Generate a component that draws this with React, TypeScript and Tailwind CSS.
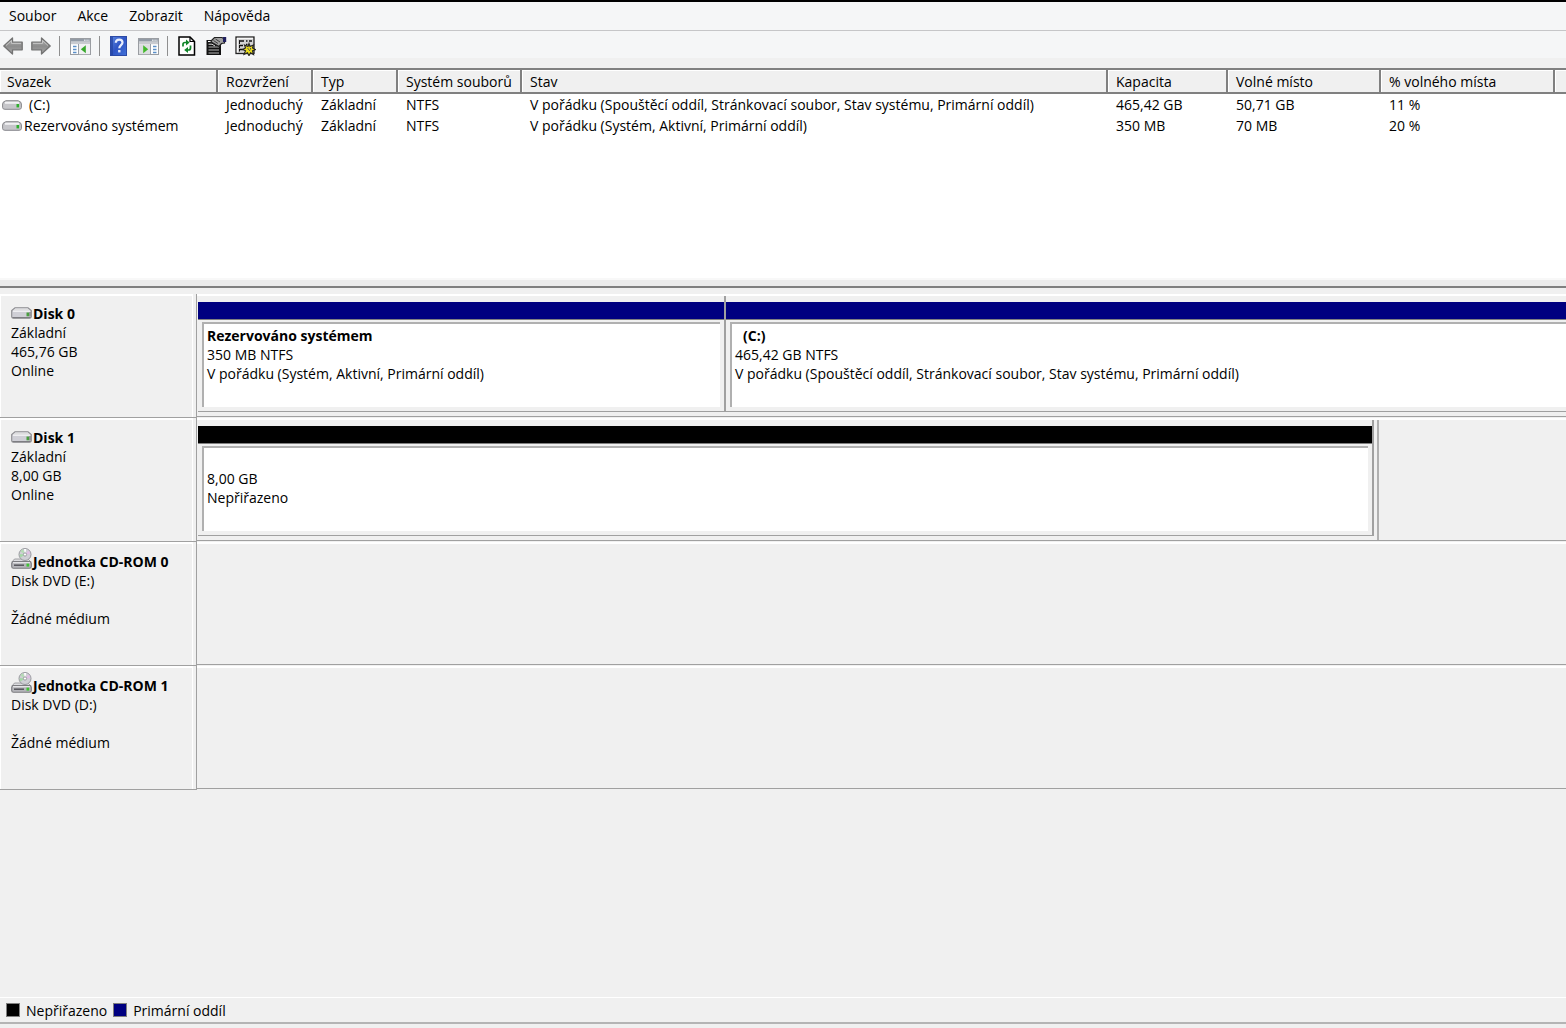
import type { ReactNode } from "react";

const menu = ["Soubor", "Akce", "Zobrazit", "Nápověda"];

const columns: { label: string; width: string }[] = [
  { label: "Svazek", width: "w-[218px]" },
  { label: "Rozvržení", width: "w-[95px]" },
  { label: "Typ", width: "w-[85px]" },
  { label: "Systém souborů", width: "w-[124px]" },
  { label: "Stav", width: "w-[586px]" },
  { label: "Kapacita", width: "w-[120px]" },
  { label: "Volné místo", width: "w-[153px]" },
  { label: "% volného místa", width: "w-[174px]" },
];

const volumes: { name: string; indent?: boolean; cells: string[] }[] = [
  {
    name: "(C:)",
    indent: true,
    cells: [
      "Jednoduchý",
      "Základní",
      "NTFS",
      "V pořádku (Spouštěcí oddíl, Stránkovací soubor, Stav systému, Primární oddíl)",
      "465,42 GB",
      "50,71 GB",
      "11 %",
    ],
  },
  {
    name: "Rezervováno systémem",
    cells: ["Jednoduchý", "Základní", "NTFS", "V pořádku (Systém, Aktivní, Primární oddíl)", "350 MB", "70 MB", "20 %"],
  },
];

function ArrowIcon({ flip }: { flip?: boolean }) {
  return (
    <svg width="20" height="18" viewBox="0 0 20 18" className={flip ? "-scale-x-100" : ""}>
      <defs>
        <linearGradient id={flip ? "arrow-r" : "arrow-l"} x1="0" y1="0" x2="0" y2="1">
          <stop offset="0" stopColor="#b8b8b8" />
          <stop offset="0.5" stopColor="#8c8c8c" />
          <stop offset="1" stopColor="#a8a8a8" />
        </linearGradient>
      </defs>
      <path
        d="M0.8 9 9.500 1V5.200H19.200V12.800H9.500V17Z"
        fill={flip ? "url(#arrow-r)" : "url(#arrow-l)"}
        stroke="#747474"
        strokeWidth="1.300"
        strokeLinejoin="round"
      />
      <path d="M3 8.500 8.500 3.500V6.400H18" fill="none" stroke="#cacaca" strokeWidth="0.900" />
    </svg>
  );
}

function PaneIcon({ right }: { right?: boolean }) {
  return (
    <svg width="21" height="17" viewBox="0 0 21 17">
      <rect x="0.5" y="0.5" width="20" height="16" fill="#fff" stroke="#9a9da2" />
      <rect x="1" y="1" width="19" height="2.6" fill="#929aa5" />
      <path d="M14 2.2h1.6M16.4 2.2h1.3M18.4 2.2h1" stroke="#fff" />
      <rect x="1" y="4" width="19" height="2.2" fill="#c9cbd0" />
      {right ? (
        <>
          <path d="M12.5 6v10.5" stroke="#9aa0a8" />
          <rect x="1" y="6.2" width="11" height="10" fill="#dcdee0" />
          <path d="M5.2 7.2v8l5-4z" fill="#43b82c" />
          <path d="M15 8.5h3.500M15 11.5h3.500M15 14.5h3.500" stroke="#5b8fc8" strokeWidth="1.4" />
        </>
      ) : (
        <>
          <path d="M8.5 6v10.5" stroke="#9aa0a8" />
          <path d="M3 8.5h3.500M3 11.5h3.500M3 14.5h3.500" stroke="#5b8fc8" strokeWidth="1.4" />
          <rect x="9" y="6.2" width="11" height="10" fill="#f0f1f2" />
          <path d="M15.8 7.2v8l-5-4z" fill="#38a82c" />
        </>
      )}
    </svg>
  );
}

function HelpIcon() {
  return (
    <svg width="17" height="20" viewBox="0 0 17 20">
      <defs>
        <linearGradient id="help" x1="0" y1="0" x2="1" y2="1">
          <stop offset="0" stopColor="#5d88e0" />
          <stop offset="0.5" stopColor="#2f55c4" />
          <stop offset="1" stopColor="#4272d8" />
        </linearGradient>
      </defs>
      <rect x="0.5" y="0.5" width="16" height="19" fill="url(#help)" stroke="#2c4aa6" />
      <path d="M2 1v18" stroke="#2342a0" strokeWidth="1.4" />
      <path
        d="M5.800 6.800C5.800 4.600 7.200 3.600 9.200 3.600c2 0 3.300 1 3.300 2.900 0 2.600-3.200 2.800-3.200 5.800"
        fill="none"
        stroke="#e8eefc"
        strokeWidth="2.200"
      />
      <rect x="8.100" y="14" width="2.400" height="2.400" fill="#e8eefc" />
    </svg>
  );
}

function RefreshIcon() {
  return (
    <svg width="18" height="20" viewBox="0 0 18 20">
      <path d="M1 1H12L16.500 5.500V19H1Z" fill="#fff" stroke="#000" strokeWidth="1.500" />
      <path d="M12 1V5.500H16.500" fill="none" stroke="#000" strokeWidth="1.200" />
      <path d="M5 10.500V8.500Q5 6.500 7 6.500H8.500" fill="none" stroke="#11852a" strokeWidth="1.700" />
      <path d="M8 3.600V9.400L11.600 6.500Z" fill="#11852a" />
      <path d="M12.500 9.500V12Q12.500 14 10.500 14H9.500" fill="none" stroke="#11852a" strokeWidth="1.700" />
      <path d="M10 11.100V16.900L6.200 14Z" fill="#11852a" />
    </svg>
  );
}

function PropertiesIcon() {
  return (
    <svg width="21" height="20" viewBox="0 0 21 20">
      <path d="M0.500 4H15V19H0.500Z" fill="#111" />
      <path d="M2 5.500H5" stroke="#fff" strokeWidth="1.100" />
      <path d="M2.500 11H13M2.500 14H13M2.500 17H13" stroke="#c8c8c8" strokeWidth="0.900" />
      <path d="M2.500 8.200H6L9 10" stroke="#ddd" fill="none" />
      <path d="M5 5 8.500 1.500H16L18.500 3V7L15.500 7.500 13 10.500 6 6.500Z" fill="#a0a0a0" stroke="#222" strokeWidth="1.200" />
      <path d="M7.500 4.500 12 7.500M9.500 3 14 6" stroke="#333" strokeWidth="0.900" />
      <rect x="17" y="1" width="3.200" height="5" fill="#20205e" />
    </svg>
  );
}

function SettingsIcon() {
  return (
    <svg width="21" height="20" viewBox="0 0 21 20">
      <rect x="1" y="1" width="18" height="16.500" fill="#d4d4d4" stroke="#222" strokeWidth="1.300" />
      <path d="M2 2.300H18M2.300 2V16.500" stroke="#fff" />
      <path d="M4 5H9M4 9.500H8M4 13.500H8" stroke="#111" strokeWidth="1.400" />
      <path d="M4.500 4.500V8M4.500 9V12M4.500 13V15.500" stroke="#111" />
      <path d="M11 5H12.500M14 5H17M11 8.500H12.500" stroke="#111" strokeWidth="1.500" />
      <path
        d="M14 7.500 15 10.500 18.500 9 17.500 12 20.500 13.500 17.500 14.800 18.500 18.500 15.500 16.800 14 19.700 12.500 16.800 9 18.500 10.500 14.800 7.500 13.500 10.500 12 9.500 9 13 10.500Z"
        fill="#e8dc1c"
        stroke="#222"
        strokeWidth="1.100"
      />
      <path d="M12.500 12 15 15M15.500 12V13.500" stroke="#555" />
    </svg>
  );
}

function VolumeIcon() {
  return (
    <svg width="20" height="10" viewBox="0 0 20 10" className="shrink-0">
      <path d="M4 0.700H16Q19.400 1.500 19.400 4V7.500Q19.400 9.300 17 9.300H3Q0.600 9.300 0.600 7.500V4Q0.600 1.500 4 0.700Z" fill="#c6c6ca" stroke="#88888c" />
      <path d="M3 2.800H17" stroke="#f2f2f4" strokeWidth="2" />
      <rect x="14.500" y="4" width="2.600" height="3.400" fill="#2fae2f" />
    </svg>
  );
}

function DiskIcon() {
  return (
    <svg width="21" height="12" viewBox="0 0 21 12" className="mr-px mb-1 shrink-0">
      <path d="M4 0.800H17L20.300 3.500V9.800Q20.300 11.300 18.500 11.300H2.500Q0.700 11.300 0.700 9.800V3.500Z" fill="#cfcfd6" stroke="#8c8c90" strokeWidth="1.100" />
      <path d="M4.300 1.500H16.700L19 3.600H2Z" fill="#dededf" />
      <path d="M2 4.200H19" stroke="#f6f6f8" strokeWidth="1.200" />
      <path d="M1.500 10.600H19.500" stroke="#77777b" />
      <rect x="15.500" y="5.500" width="2.700" height="3.800" fill="#4a9e40" />
      <path d="M19 5V9.500" stroke="#6d6d70" />
    </svg>
  );
}

function CdRomIcon() {
  return (
    <svg width="21" height="21" viewBox="0 0 21 21" className="mr-px mb-[2px] shrink-0">
      <path d="M3.500 11H17L20 14H1Z" fill="#dcdce0" stroke="#98989c" strokeWidth="0.900" />
      <circle cx="14" cy="6.500" r="6" fill="#cfd0d5" stroke="#98989e" />
      <path d="M14 6.500 9.500 3.200A5.500 5.500 0 0 1 12 1.300Z" fill="#b4dcb4" />
      <path d="M14 6.500 17.500 2.500A5.500 5.500 0 0 1 19.300 6Z" fill="#e0bfe4" />
      <path d="M14 6.500 9.500 9.500A5.500 5.500 0 0 1 8.700 6Z" fill="#a4d8a6" />
      <path d="M14 6.500 13 1H15.300Z" fill="#fff" />
      <circle cx="14" cy="6.500" r="1.600" fill="#fff" stroke="#8c8c92" strokeWidth="0.800" />
      <rect x="0.700" y="13.600" width="19.600" height="6.600" rx="1.800" fill="#b5b5ba" stroke="#7c7c80" strokeWidth="1.100" />
      <path d="M2 14.700H19" stroke="#f2f2f4" />
      <path d="M3 17.200H13" stroke="#55555a" strokeWidth="1.500" />
      <rect x="15.500" y="15.600" width="2.700" height="3" fill="#3fc235" />
    </svg>
  );
}

function ToolButton({ label, children }: { label: string; children: ReactNode }) {
  return (
    <button type="button" aria-label={label} className="flex h-5 min-w-5 items-center">
      {children}
    </button>
  );
}

function Separator() {
  return <span className="mr-[2px] h-5 w-px bg-[#8f8f8f]" />;
}

function Partition({ color, className, children }: { color: string; className: string; children: ReactNode }) {
  return (
    <div className={`flex flex-col border-b border-[#a0a0a0] pt-1.5 ${className}`}>
      <div className={`h-[18px] border-b border-[#808080] ${color}`} />
      <div className="mx-1 mt-[2px] mb-1 flex-1 border-t-2 border-l-2 border-[#b0b0b0] bg-white pt-[2px] pl-[3px] leading-[19px] whitespace-nowrap">
        {children}
      </div>
    </div>
  );
}

function DiskRow({ icon, title, lines, children }: { icon: ReactNode; title: string; lines: string[]; children?: ReactNode }) {
  return (
    <section className="flex h-[124px]">
      <div className="flex w-[197px] shrink-0 border-r border-b border-[#a0a0a0]">
        <div className="flex-1 border-t-2 border-r border-l border-white pt-2 pl-[10px] leading-[19px]">
          <h2 className="flex h-[19px] items-end font-bold whitespace-nowrap">
            {icon}
            <span>{title}</span>
          </h2>
          {lines.map((line, i) => (
            <p key={i} className="h-[19px]">
              {line}
            </p>
          ))}
        </div>
        <div className="w-[3px]" />
      </div>
      <div className="mb-px flex min-w-0 flex-1 overflow-hidden border-t-2 border-b border-t-white border-b-[#a0a0a0] pl-px">
        {children}
      </div>
    </section>
  );
}

export default function App() {
  return (
    <div className="flex min-h-screen flex-col overflow-x-hidden bg-[#f0f0f0] font-['Open_Sans','Noto_Sans',sans-serif] text-[14px] text-black">
      <nav className="flex h-[31px] items-center gap-[21px] border-t-2 border-b border-t-black border-b-[#c6c6c8] bg-[#f5f6f7] px-[9px] pb-[2px]">
        {menu.map((item) => (
          <button key={item} type="button">
            {item}
          </button>
        ))}
      </nav>

      <div className="flex h-[27px] items-center gap-2 bg-[#f5f6f7] px-[3px] pt-[3px]">
        <ToolButton label="Zpět">
          <ArrowIcon />
        </ToolButton>
        <ToolButton label="Vpřed">
          <ArrowIcon flip />
        </ToolButton>
        <Separator />
        <ToolButton label="Strom konzoly">
          <PaneIcon />
        </ToolButton>
        <Separator />
        <ToolButton label="Nápověda">
          <HelpIcon />
        </ToolButton>
        <ToolButton label="Podokno akcí">
          <PaneIcon right />
        </ToolButton>
        <Separator />
        <ToolButton label="Aktualizovat">
          <RefreshIcon />
        </ToolButton>
        <ToolButton label="Vlastnosti">
          <PropertiesIcon />
        </ToolButton>
        <ToolButton label="Nastavení">
          <SettingsIcon />
        </ToolButton>
      </div>

      <div className="mt-[10px] h-[210px] overflow-hidden bg-white">
        <table className="w-full table-fixed border-separate border-spacing-0 whitespace-nowrap">
          <thead>
            <tr className="h-[26px]">
              {columns.map((c) => (
                <th
                  key={c.label}
                  scope="col"
                  className={`border-t-2 border-r-2 border-b-2 border-[#808080] bg-[#f0f0f0] p-0 pt-px pl-2 text-left leading-[21px] font-normal shadow-[inset_1px_1px_0_#fff] first:pl-[7px] ${c.width}`}
                >
                  {c.label}
                </th>
              ))}
              <td className="border-t-2 border-b-2 border-[#808080] bg-[#f0f0f0] p-0 shadow-[inset_1px_1px_0_#fff]" />
            </tr>
          </thead>
          <tbody>
            {volumes.map((v) => (
              <tr key={v.name} className="h-[21px]">
                <td className="p-0 pl-[2px]">
                  <span className={`flex items-center leading-[21px] ${v.indent ? "gap-[7px]" : "gap-[2px]"}`}>
                    <VolumeIcon />
                    {v.name}
                  </span>
                </td>
                {v.cells.map((cell, i) => (
                  <td key={i} className="p-0 pl-2 leading-[21px]">
                    {cell}
                  </td>
                ))}
                <td className="p-0" />
              </tr>
            ))}
          </tbody>
        </table>
      </div>

      <div className="mb-[6px] h-[10px] border-t-2 border-b-2 border-t-[#f8f8f8] border-b-[#808080] bg-[#ececec]" />

      <main className="flex-1">
        <DiskRow icon={<DiskIcon />} title="Disk 0" lines={["Základní", "465,76 GB", "Online"]}>
          <div className="mb-1 flex flex-1">
            <Partition color="bg-[#000080]" className="w-[528px] shrink-0 border-r-2">
              <p className="font-bold">Rezervováno systémem</p>
              <p>350 MB NTFS</p>
              <p>V pořádku (Systém, Aktivní, Primární oddíl)</p>
            </Partition>
            <Partition color="bg-[#000080]" className="-mr-2 flex-1">
              <p className="pl-2 font-bold">(C:)</p>
              <p>465,42 GB NTFS</p>
              <p>V pořádku (Spouštěcí oddíl, Stránkovací soubor, Stav systému, Primární oddíl)</p>
            </Partition>
          </div>
        </DiskRow>
        <DiskRow icon={<DiskIcon />} title="Disk 1" lines={["Základní", "8,00 GB", "Online"]}>
          <div className="flex w-[1181px] border-r-2 border-[#b0b0b0] pr-[3px] pb-1">
            <Partition color="bg-black" className="flex-1 border-r-2">
              <p className="pt-[19px]">8,00 GB</p>
              <p>Nepřiřazeno</p>
            </Partition>
          </div>
        </DiskRow>
        <DiskRow icon={<CdRomIcon />} title="Jednotka CD-ROM 0" lines={["Disk DVD (E:)", "", "Žádné médium"]} />
        <DiskRow icon={<CdRomIcon />} title="Jednotka CD-ROM 1" lines={["Disk DVD (D:)", "", "Žádné médium"]} />
      </main>

      <footer className="mb-1 flex h-[27px] items-center gap-[6px] border-t border-b-2 border-t-white border-b-[#b4b4b4] px-[6px]">
        <span className="flex items-center gap-[6px]">
          <span className="size-[14px] border border-[#808080] bg-black" />
          Nepřiřazeno
        </span>
        <span className="flex items-center gap-[6px]">
          <span className="size-[14px] border border-[#808080] bg-[#000080]" />
          Primární oddíl
        </span>
      </footer>
    </div>
  );
}
